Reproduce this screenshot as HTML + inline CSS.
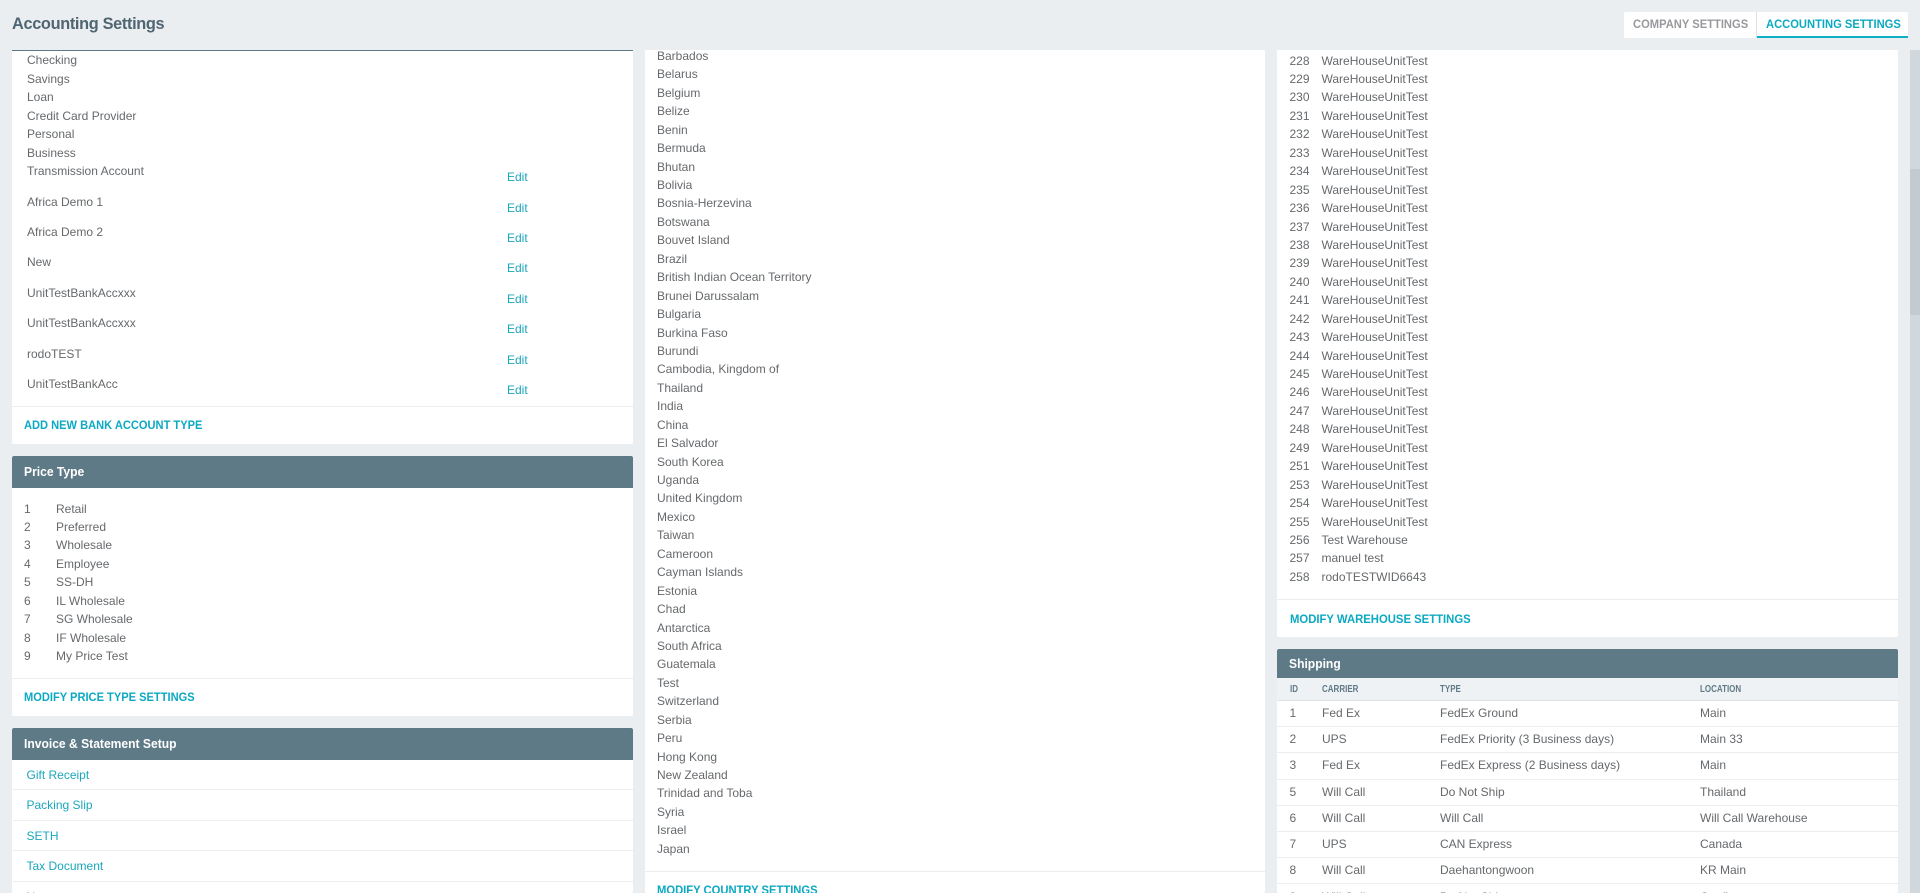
<!DOCTYPE html>
<html lang="en">
<head>
<meta charset="utf-8">
<title>Accounting Settings</title>
<style>
html,body{margin:0;padding:0;width:1920px;height:893px;overflow:hidden;background:#ebeef1}
body{position:relative;font-family:"Liberation Sans",sans-serif;font-size:12px;color:#66696c}
*{box-sizing:border-box}
.a{position:absolute;white-space:nowrap}
.sx{display:inline-block;transform-origin:0 50%;white-space:nowrap}
#title{left:12px;top:14px;font-size:17px;line-height:20px;font-weight:bold;color:#4f6572;letter-spacing:-.35px;transform:scaleX(.96);transform-origin:0 50%}
#tabs{left:1624px;top:12px;width:284px;height:26px;background:#fff;border-radius:2px}
.tab{position:absolute;top:0;height:26px;line-height:25px;font-size:12px;font-weight:bold}
.tab .sx{transform:scaleX(.932)}
#clip{position:absolute;left:0;top:50px;width:1910px;height:843px;overflow:hidden}
#in{position:absolute;left:0;top:-50px;width:1910px;height:893px}
.card{position:absolute;background:#fff;border-radius:0 0 2px 2px}
.hd{position:absolute;background:#5f7a87;color:#fff;font-weight:bold;font-size:13px;border-radius:2px 2px 0 0;padding-left:12px}
.hd .sx{transform:scaleX(.93)}
.div{position:absolute;height:1px;background:#ebeef1}
.act{position:absolute;font-size:12px;font-weight:bold;color:#0ba9c2;line-height:16px;white-space:nowrap;transform:scaleX(.935);transform-origin:0 50%}
.l{position:absolute;line-height:18.45px;white-space:nowrap}
.l div{height:18.45px}
.e{color:#1ba6bc}
.r{position:absolute;left:1277px;width:621px;height:26px;line-height:26px}
.r span{position:absolute;white-space:nowrap}
.th{position:absolute;font-size:10px;font-weight:bold;color:#5f7a87;line-height:14px;transform:scaleX(.8);transform-origin:0 50%}
</style>
</head>
<body>
<div class="a" id="title">Accounting Settings</div>
<div class="a" id="tabs">
  <div class="tab" style="left:9px;color:#97999c"><span class="sx">COMPANY SETTINGS</span></div>
  <div style="position:absolute;left:132px;top:0;width:1px;height:26px;background:#dfe2e4"></div>
  <div class="tab" style="left:133px;width:151px;padding-left:9px;color:#0ba9c2;border-bottom:2px solid #0fb0c6"><span class="sx">ACCOUNTING SETTINGS</span></div>
</div>

<div id="clip"><div id="in">

<!-- LEFT -->
<div class="card" style="left:12px;top:50px;width:621px;height:394px;border-top:1.5px solid #5f7a87"></div>
<div class="a" style="left:27px;top:51px;line-height:18px">Checking</div>
<div class="a" style="left:27px;top:70px;line-height:18px">Savings</div>
<div class="a" style="left:27px;top:88px;line-height:18px">Loan</div>
<div class="a" style="left:27px;top:107px;line-height:18px">Credit Card Provider</div>
<div class="a" style="left:27px;top:125px;line-height:18px">Personal</div>
<div class="a" style="left:27px;top:144px;line-height:18px">Business</div>
<div class="a" style="left:27px;top:162px;line-height:18px">Transmission Account</div>
<div class="a e" style="left:507px;top:168px;line-height:18px">Edit</div>
<div class="a" style="left:27px;top:193px;line-height:18px">Africa Demo 1</div>
<div class="a e" style="left:507px;top:199px;line-height:18px">Edit</div>
<div class="a" style="left:27px;top:223px;line-height:18px">Africa Demo 2</div>
<div class="a e" style="left:507px;top:229px;line-height:18px">Edit</div>
<div class="a" style="left:27px;top:253px;line-height:18px">New</div>
<div class="a e" style="left:507px;top:259px;line-height:18px">Edit</div>
<div class="a" style="left:27px;top:284px;line-height:18px">UnitTestBankAccxxx</div>
<div class="a e" style="left:507px;top:290px;line-height:18px">Edit</div>
<div class="a" style="left:27px;top:314px;line-height:18px">UnitTestBankAccxxx</div>
<div class="a e" style="left:507px;top:320px;line-height:18px">Edit</div>
<div class="a" style="left:27px;top:345px;line-height:18px">rodoTEST</div>
<div class="a e" style="left:507px;top:351px;line-height:18px">Edit</div>
<div class="a" style="left:27px;top:375px;line-height:18px">UnitTestBankAcc</div>
<div class="a e" style="left:507px;top:381px;line-height:18px">Edit</div>
<div class="div" style="left:12px;top:406px;width:621px"></div>
<div class="act" style="left:24px;top:417px;transform:scaleX(.925)">ADD NEW BANK ACCOUNT TYPE</div>

<div class="card" style="left:12px;top:456px;width:621px;height:260px"></div>
<div class="hd" style="left:12px;top:456px;width:621px;height:32px;line-height:31px"><span class="sx">Price Type</span></div>
<div class="l" style="left:24px;top:499.62px">
<div>1</div><div>2</div><div>3</div><div>4</div><div>5</div><div>6</div><div>7</div><div>8</div><div>9</div>
</div>
<div class="l" style="left:56px;top:499.62px">
<div>Retail</div><div>Preferred</div><div>Wholesale</div><div>Employee</div><div>SS-DH</div><div>IL Wholesale</div><div>SG Wholesale</div><div>IF Wholesale</div><div>My Price Test</div>
</div>
<div class="div" style="left:12px;top:678px;width:621px"></div>
<div class="act" style="left:24px;top:689px;transform:scaleX(.925)">MODIFY PRICE TYPE SETTINGS</div>

<div class="card" style="left:12px;top:728px;width:621px;height:165px"></div>
<div class="hd" style="left:12px;top:728px;width:621px;height:32px;line-height:31px"><span class="sx">Invoice &amp; Statement Setup</span></div>
<div class="a e" style="left:26.5px;top:766px;line-height:18px">Gift Receipt</div>
<div class="div" style="left:13px;top:789px;width:620px"></div>
<div class="a e" style="left:26.5px;top:796px;line-height:18px">Packing Slip</div>
<div class="div" style="left:13px;top:820px;width:620px"></div>
<div class="a e" style="left:26.5px;top:827px;line-height:18px">SETH</div>
<div class="div" style="left:13px;top:850px;width:620px"></div>
<div class="a e" style="left:26.5px;top:857px;line-height:18px">Tax Document</div>
<div class="div" style="left:13px;top:881px;width:620px"></div>
<div class="a e" style="left:26.5px;top:888px;line-height:18px">Notes</div>

<!-- MIDDLE -->
<div class="card" style="left:645px;top:50px;width:620px;height:843px"></div>
<div class="l" style="left:657px;top:46.98px">
<div>Barbados</div><div>Belarus</div><div>Belgium</div><div>Belize</div><div>Benin</div><div>Bermuda</div><div>Bhutan</div><div>Bolivia</div><div>Bosnia-Herzevina</div><div>Botswana</div><div>Bouvet Island</div><div>Brazil</div><div>British Indian Ocean Territory</div><div>Brunei Darussalam</div><div>Bulgaria</div><div>Burkina Faso</div><div>Burundi</div><div>Cambodia, Kingdom of</div><div>Thailand</div><div>India</div><div>China</div><div>El Salvador</div><div>South Korea</div><div>Uganda</div><div>United Kingdom</div><div>Mexico</div><div>Taiwan</div><div>Cameroon</div><div>Cayman Islands</div><div>Estonia</div><div>Chad</div><div>Antarctica</div><div>South Africa</div><div>Guatemala</div><div>Test</div><div>Switzerland</div><div>Serbia</div><div>Peru</div><div>Hong Kong</div><div>New Zealand</div><div>Trinidad and Toba</div><div>Syria</div><div>Israel</div><div>Japan</div>
</div>
<div class="div" style="left:645px;top:871px;width:620px"></div>
<div class="act" style="left:657px;top:882px">MODIFY COUNTRY SETTINGS</div>

<!-- RIGHT -->
<div class="card" style="left:1277px;top:50px;width:621px;height:587px"></div>
<div class="l" style="left:1289.5px;top:51.62px">
<div>228</div><div>229</div><div>230</div><div>231</div><div>232</div><div>233</div><div>234</div><div>235</div><div>236</div><div>237</div><div>238</div><div>239</div><div>240</div><div>241</div><div>242</div><div>243</div><div>244</div><div>245</div><div>246</div><div>247</div><div>248</div><div>249</div><div>251</div><div>253</div><div>254</div><div>255</div><div>256</div><div>257</div><div>258</div>
</div>
<div class="l" style="left:1321.5px;top:51.62px">
<div>WareHouseUnitTest</div><div>WareHouseUnitTest</div><div>WareHouseUnitTest</div><div>WareHouseUnitTest</div><div>WareHouseUnitTest</div><div>WareHouseUnitTest</div><div>WareHouseUnitTest</div><div>WareHouseUnitTest</div><div>WareHouseUnitTest</div><div>WareHouseUnitTest</div><div>WareHouseUnitTest</div><div>WareHouseUnitTest</div><div>WareHouseUnitTest</div><div>WareHouseUnitTest</div><div>WareHouseUnitTest</div><div>WareHouseUnitTest</div><div>WareHouseUnitTest</div><div>WareHouseUnitTest</div><div>WareHouseUnitTest</div><div>WareHouseUnitTest</div><div>WareHouseUnitTest</div><div>WareHouseUnitTest</div><div>WareHouseUnitTest</div><div>WareHouseUnitTest</div><div>WareHouseUnitTest</div><div>WareHouseUnitTest</div><div>Test Warehouse</div><div>manuel test</div><div>rodoTESTWID6643</div>
</div>
<div class="div" style="left:1277px;top:599px;width:621px"></div>
<div class="act" style="left:1290px;top:611px;transform:scaleX(.942)">MODIFY WAREHOUSE SETTINGS</div>

<div class="card" style="left:1277px;top:649px;width:621px;height:244px"></div>
<div class="hd" style="left:1277px;top:649px;width:621px;height:29px;line-height:29px"><span class="sx">Shipping</span></div>
<div style="position:absolute;left:1277px;top:678px;width:621px;height:23px;background:#eff2f4;border-bottom:1px solid #dde2e5"></div>
<div class="th" style="left:1289.5px;top:683px">ID</div>
<div class="th" style="left:1322px;top:683px">CARRIER</div>
<div class="th" style="left:1440px;top:683px">TYPE</div>
<div class="th" style="left:1700px;top:683px">LOCATION</div>

<div class="r" style="top:700px"><span style="left:12.5px">1</span><span style="left:45px">Fed Ex</span><span style="left:163px">FedEx Ground</span><span style="left:423px">Main</span></div>
<div class="div" style="left:1277px;top:726px;width:621px"></div>
<div class="r" style="top:726px"><span style="left:12.5px">2</span><span style="left:45px">UPS</span><span style="left:163px">FedEx Priority (3 Business days)</span><span style="left:423px">Main 33</span></div>
<div class="div" style="left:1277px;top:752px;width:621px"></div>
<div class="r" style="top:752px"><span style="left:12.5px">3</span><span style="left:45px">Fed Ex</span><span style="left:163px">FedEx Express (2 Business days)</span><span style="left:423px">Main</span></div>
<div class="div" style="left:1277px;top:779px;width:621px"></div>
<div class="r" style="top:779px"><span style="left:12.5px">5</span><span style="left:45px">Will Call</span><span style="left:163px">Do Not Ship</span><span style="left:423px">Thailand</span></div>
<div class="div" style="left:1277px;top:805px;width:621px"></div>
<div class="r" style="top:805px"><span style="left:12.5px">6</span><span style="left:45px">Will Call</span><span style="left:163px">Will Call</span><span style="left:423px">Will Call Warehouse</span></div>
<div class="div" style="left:1277px;top:831px;width:621px"></div>
<div class="r" style="top:831px"><span style="left:12.5px">7</span><span style="left:45px">UPS</span><span style="left:163px">CAN Express</span><span style="left:423px">Canada</span></div>
<div class="div" style="left:1277px;top:857px;width:621px"></div>
<div class="r" style="top:857px"><span style="left:12.5px">8</span><span style="left:45px">Will Call</span><span style="left:163px">Daehantongwoon</span><span style="left:423px">KR Main</span></div>
<div class="div" style="left:1277px;top:883px;width:621px"></div>
<div class="r" style="top:884px"><span style="left:12.5px">9</span><span style="left:45px">Will Call</span><span style="left:163px">Do Not Ship</span><span style="left:423px">Confirm</span></div>

</div></div>

<!-- SCROLLBAR -->
<div style="position:absolute;left:1910px;top:50px;width:10px;height:843px;background:#d0d7dd"></div>
<div style="position:absolute;left:1910px;top:169px;width:10px;height:146px;background:#c2cbd2"></div>
</body>
</html>
